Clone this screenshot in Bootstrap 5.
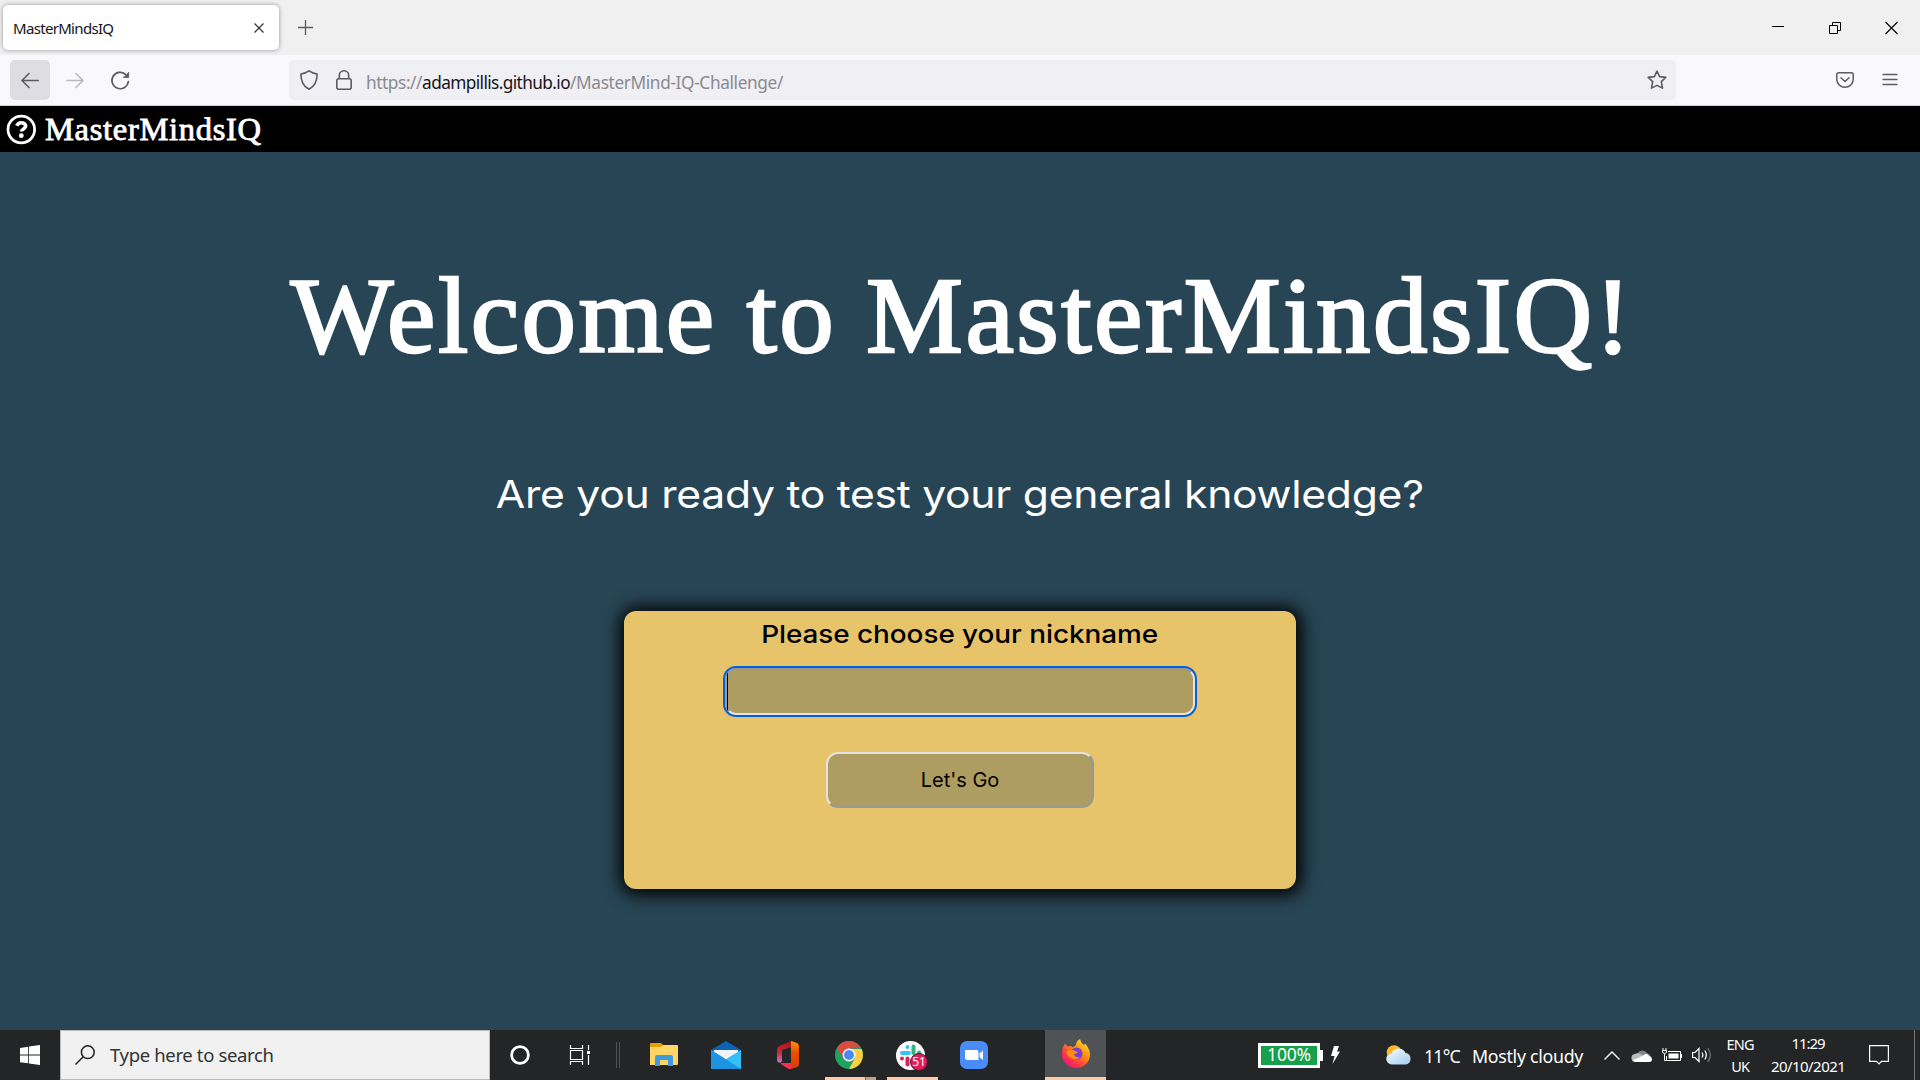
<!DOCTYPE html>
<html lang="en">
<head>
<meta charset="utf-8">
<title>MasterMindsIQ</title>
<link rel="stylesheet" href="https://cdn.jsdelivr.net/npm/bootstrap@5.3.0/dist/css/bootstrap.min.css">
<style>
html,body{height:100%}
body{width:1920px;height:1080px;overflow:hidden;background:#284555;font-family:"Noto Sans","Open Sans",sans-serif}
svg{display:block;flex:none;overflow:visible}
.t{white-space:nowrap;display:block;flex:none}
.tabstrip{height:55px;background:#f0f0f0;padding:5px 22px 5px 3px}
.tab{width:276px;height:45px;background:#fff;border-radius:5px;box-shadow:0 0 4px rgba(80,80,100,.6);padding:0 15px 0 10px}
.tab-title{font-size:15px;line-height:20px;color:#15141a;padding-top:1px;letter-spacing:-.68px}
.win-restore{margin:0 44px 0 45px}
.toolbar{height:51px;background:#f9f9fb;border-bottom:1px solid #ccccce;padding:0 20px 0 10px}
.tool-btn{width:40px;height:40px;border-radius:5px}
.tool-btn.lit{background:#dddde2}
.urlbar{width:1387px;height:40px;background:#f0eff4;border-radius:5px;margin-left:149px;padding:0 9px 0 11px}
.url{font-size:17.25px;line-height:24px;color:#8a8a8f;margin-left:14px;padding-top:5px;letter-spacing:-.42px}
.url .host{color:#15141a;letter-spacing:-.61px}
.url .path{letter-spacing:-.37px}
.brandbar{height:46px;background:#000;padding:0 0 0 6px}
.brand{font:400 31px/40px "Liberation Serif",serif;color:#fff;-webkit-text-stroke:.8px #fff;margin:2px 0 0 9px;letter-spacing:.64px;transform:scaleX(1.05);transform-origin:left}
.hero{height:878px;color:#fff}
.title{font:400 109px/130px "Liberation Serif",serif;-webkit-text-stroke:2.4px #fff;margin:99px 0 1px 4px;letter-spacing:2.5px}
.tagline{font:400 38.5px/50px Inter,sans-serif;margin:87px 0 0;letter-spacing:-.25px;transform:scaleX(1.108)}
.nick{width:672px;height:278px;background:#e7c469;border-radius:12px;box-shadow:1px 1px 17px 5px #000;color:#000;margin-top:92px;padding-top:8px}
.nick-label{font:500 24.7px/30px Inter,sans-serif;letter-spacing:-.05px;transform:scaleX(1.13)}
.nick-input{width:470px;height:47px;border:2px solid;border-color:#989898 #e3e3e3 #e3e3e3 #989898;background:#ae9d61;border-radius:11px;outline:2px solid #0060df;margin-top:19px;padding:3px 0}
.caret{width:1px;height:37px;background:#000}
.go{width:268px;height:56px;border:2px solid;border-color:#e3e3e3 #989898 #989898 #e3e3e3;background:#ae9d61;border-radius:12px;margin-top:37px;color:#000;padding:0}
.go-text{font:400 20px/26px Inter,sans-serif}
.taskbar{height:50px;background:#232527;color:#fff}
.taskbar>*{flex:none}
.start{width:60px;padding-left:20px}
.search{width:430px;height:50px;background:#f1f1f1;border:1px solid #b9b9b9;padding-left:14px;color:#333}
.search-text{font-size:18.5px;line-height:24px;margin-left:15px;letter-spacing:-.35px}
.cell{height:50px;position:relative}
.run::after{content:"";position:absolute;left:0;right:0;bottom:0;height:3px;background:#fdcaa8}
.chrome::before{content:"";position:absolute;z-index:1;right:0;bottom:0;width:11px;height:3px;background:#c79d86;border-left:1px solid #7a665c}
.badge-n{position:absolute;left:23px;top:22.5px;width:18px;height:18px;border-radius:9px;background:#e01e5a;border:1px solid #4e1226;font-size:12px;line-height:16px;text-align:center;color:#fff}
.batt{width:62px;height:25px;border:3px solid #fff;background:#16a04c;margin-left:152px}
.tip{width:3px;height:11px;background:#fff}
.batt-text{font-size:17.5px;line-height:20px;letter-spacing:-.2px;padding-bottom:2px}
.wx{font-size:17.8px;line-height:24px;padding-top:2px}
.temp{margin-left:12px;letter-spacing:-.8px}
.sky{margin-left:12px;letter-spacing:-.3px}
.lang{width:40px;margin-left:8px;font-size:14.5px;line-height:22px;letter-spacing:-.9px}
.clock{width:80px;margin-left:8px;font-size:15px;line-height:23px;letter-spacing:-.55px}
.clock .hour{letter-spacing:-1.08px}
.edge{width:1px;height:50px;background:#777;margin-left:25px}
</style>
</head>
<body class="d-flex flex-column">
<header>
 <div class="tabstrip d-flex align-items-center">
  <div class="tab d-flex align-items-center justify-content-between">
   <span class="t tab-title">MasterMindsIQ</span>
   <svg width="10" height="10" viewBox="0 0 10 10" stroke="#333" stroke-width="1.2"><path d="M.5.5l9 9M9.500 .5l-9 9"/></svg>
  </div>
  <svg class="ms-3" width="31" height="15" viewBox="0 0 31 15" stroke="#5b5b66" stroke-width="1.3"><path d="M3 7.500h15M10.500 0v15"/></svg>
  <div class="ms-auto d-flex align-items-center">
   <svg width="12" height="12" viewBox="0 0 12 12" stroke="#000"><path d="M0 4.500h12"/></svg>
   <svg class="win-restore" width="12" height="12" viewBox="0 0 12 12" fill="none" stroke="#000"><path d="M.5 3.500h8v8h-8zM3.500 3.500v-3h8v8h-3"/></svg>
   <svg width="13" height="12" viewBox="0 0 13 12" stroke="#000" stroke-width="1.1"><path d="M.5 0l12 12M12.500 0l-12 12"/></svg>
  </div>
 </div>
 <div class="toolbar d-flex align-items-center">
  <div class="tool-btn lit d-flex align-items-center justify-content-center"><svg width="18" height="16" fill="none" stroke="#5b5b66" stroke-width="1.6" stroke-linecap="round" stroke-linejoin="round"><path d="M17.200 8.500H1M8 1.500L1 8.500l7 7"/></svg></div>
  <div class="tool-btn d-flex align-items-center justify-content-center ms-1 ps-1"><svg width="18" height="16" fill="none" stroke="#b9b9be" stroke-width="1.6" stroke-linecap="round" stroke-linejoin="round"><path d="M0 8.500H16M9 1.500l7 7-7 7"/></svg></div>
  <div class="tool-btn d-flex align-items-center justify-content-center" style="margin-left:6px"><svg width="20" height="20" viewBox="0 0 20 20" fill="none" stroke="#5b5b66" stroke-width="1.700" stroke-linecap="round"><path d="M18.300 11.500A8.200 8.200 0 1 1 15.500 4.300"/><path d="M18.700 2.500v5h-5z" fill="#5b5b66" stroke-width=".8" stroke-linejoin="round"/></svg></div>
  <div class="urlbar d-flex align-items-center">
   <svg width="18" height="20" viewBox="0 0 18 20" fill="none" stroke="#5b5b66" stroke-width="1.600" stroke-linejoin="round"><path d="M9 .8C6.500 2.600 3.500 3.500.9 4c0 6.500 2.500 12.500 8.100 15.200C14.600 16.500 17.100 10.500 17.100 4 14.500 3.500 11.500 2.600 9 .8z"/></svg>
   <svg style="margin-left:18px" width="16" height="20" viewBox="0 0 16 20" fill="none" stroke="#5b5b66" stroke-width="1.600"><rect x=".8" y="8.800" width="14.400" height="10.400" rx="2"/><path d="M3.300 8.800V5.500a4.700 4.700 0 0 1 9.400 0v3.300"/></svg>
   <span class="t url">https://<span class="host">adampillis.github.io</span><span class="path">/MasterMind-IQ-Challenge/</span></span>
   <svg class="ms-auto" width="20" height="20" viewBox="0 0 20 20" fill="none" stroke="#5b5b66" stroke-width="1.600" stroke-linejoin="round"><path d="M10 1.100l2.600 5.500 6.200.8-4.500 4.200 1.200 6.500L10 15.400l-5.500 2.700 1.200-6.500L1.200 7.400l6.200-.8z"/></svg>
  </div>
  <svg class="ms-auto" width="18" height="16" viewBox="0 0 18 16" fill="none" stroke="#5b5b66" stroke-width="1.500" stroke-linecap="round" stroke-linejoin="round"><path d="M2.500.8h13q1.700 0 1.700 1.700V7.300a8.200 8 0 0 1-16.400 0V2.500Q.8.8 2.500.8zM5 5.800l4 3.700 4-3.700"/></svg>
  <svg style="margin:0 2px 0 28px" width="16" height="14" viewBox="0 0 16 14" stroke="#5b5b66" stroke-width="1.300" stroke-linecap="round"><path d="M1 1.500h14M1 6.500h14M1 11.500h14"/></svg>
 </div>
</header>
<nav class="brandbar d-flex align-items-center">
 <svg width="30" height="30" viewBox="0 0 30 30" fill="none" stroke="#fff"><circle cx="15.300" cy="15.500" r="13.300" stroke-width="2.800"/><path d="M10.800 11.700c1-2.200 2.500-3 4.500-3 2.400 0 4.400 1.300 4.400 3.400 0 2.800-4.200 2.800-4.200 5.300" stroke-width="3.600"/><circle cx="15.300" cy="21.700" r="2.400" fill="#fff" stroke="none"/></svg>
 <span class="t brand">MasterMindsIQ</span>
</nav>
<main class="hero d-flex flex-column align-items-center">
 <h1 class="t title">Welcome to MasterMindsIQ!</h1>
 <p class="t tagline">Are you ready to test your general knowledge?</p>
 <form class="nick d-flex flex-column align-items-center">
  <label class="t nick-label">Please choose your nickname</label>
  <div class="nick-input"><div class="caret"></div></div>
  <button type="button" class="go d-flex align-items-center justify-content-center"><span class="t go-text">Let's Go</span></button>
 </form>
</main>
<footer class="taskbar d-flex align-items-center">
 <div class="start"><svg width="20" height="20" viewBox="0 0 20 20" fill="#fff"><path d="M0 2.900L8.200 1.700V9.500H0zM9 1.600L20 0v9.500H9zM0 10.400h8.200v7.900L0 17.200zM9 10.400h11V20L9 18.500z"/></svg></div>
 <div class="search d-flex align-items-center">
  <svg width="20" height="20" viewBox="0 0 20 20" fill="none" stroke="#222" stroke-width="1.500"><circle cx="12.800" cy="7.200" r="6.400"/><path d="M8.200 11.800L.5 19.500"/></svg>
  <span class="t search-text">Type here to search</span>
 </div>
 <svg style="margin-left:20px" width="20" height="20" fill="none" stroke="#fff" stroke-width="2.700"><circle cx="10" cy="10" r="8.400"/></svg>
 <svg style="margin-left:40px" width="20" height="20" viewBox="0 0 20 20" fill="none" stroke="#fff" stroke-width="1.200"><path d="M.5 0v3.500h12V0M.5 5.500h12v9H.5zM.5 20v-3.500h12V20M18.500 0v5M18.500 10v10"/><path d="M17 6h3v3h-3z" fill="#fff" stroke="none"/></svg>
 <svg style="margin-left:26px" width="4" height="26" stroke="#505355"><path d="M.5 0v26M3.500 0v26"/></svg>
 <svg style="margin-left:30px" width="28" height="24" viewBox="0 0 28 24"><path d="M0 1q0-1 1-1h10l2 2v4H0z" fill="#e6a100"/><path d="M0 4h11l2-2h14q1 0 1 1v18q0 1-1 1H0z" fill="#ffd565"/><path d="M5 23V14q0-2 2-2h14q2 0 2 2v9h-5v-6h-8v6z" fill="#3f9be0"/></svg>
 <svg style="margin-left:33px" width="30" height="28" viewBox="0 0 30 28"><path d="M0 9L15 0l15 9v8H0z" fill="#0a63b4"/><path d="M3 9h24v9H3z" fill="#f3f3f5"/><path d="M0 9l15 9 15-9v19H0z" fill="#32c0f5"/><path d="M0 9l30 19H0z" fill="#1c94e2"/><path d="M3 9h24l-12 9z" fill="#f3f3f5"/></svg>
 <svg style="margin-left:36px" width="22" height="28" viewBox="0 0 22 28"><defs><linearGradient id="of" x1="0" y1="0" x2="0" y2="1"><stop offset="0" stop-color="#a80f0f"/><stop offset=".55" stop-color="#c4303c"/><stop offset="1" stop-color="#c078c8"/></linearGradient><linearGradient id="og" x1="0" y1="0" x2="0" y2="1"><stop offset="0" stop-color="#ff9a00"/><stop offset=".4" stop-color="#e85000"/><stop offset="1" stop-color="#d83b01"/></linearGradient></defs><path d="M14 0L3 4.500Q0 6 0 9v10q0 3 4 2.500L5 20V9l9-3z" fill="url(#of)"/><path d="M14 0l6 2q2 .8 2 3v18q0 2.300-2 3l-6 2z" fill="url(#og)"/><path d="M4 22h10v6l-2.500 0-7-4.500Q3.500 23 4 22z" fill="#f0324b"/></svg>
 <div class="cell run chrome d-flex align-items-center justify-content-center pe-1" style="width:51px;margin-left:26px"><svg width="28" height="28" viewBox="-14 -14 28 28"><circle r="14" fill="#1da261"/><path d="M-12.100 -7A14 14 0 0 1 12.100 -7L0 -6.500-5.600 3.200z" fill="#db4b3f"/><path d="M12.600-6A14 14 0 0 1 0 14L5.800 3.200 0-6z" fill="#ffce44"/><circle r="6.400" fill="#fff"/><circle r="5" fill="#4a89f4"/></svg></div>
 <div class="cell run d-flex align-items-center justify-content-center pe-1" style="width:51px;margin-left:11px"><svg width="29" height="29" viewBox="-14.500 -14.500 29 29"><circle r="14.500" fill="#fff"/><g stroke-width="4" stroke-linecap="round" fill="none"><path d="M-8.500-2.500h7M-3-8.500v.1" stroke="#36c5f0"/><path d="M3-9v6.500M8.500-3v.1" stroke="#2eb67d"/><path d="M-3 3v6M-8.500 3v.1" stroke="#e01e5a"/></g></svg><span class="badge-n">51</span></div>
 <svg style="margin-left:22px" width="28" height="28" viewBox="0 0 28 28"><rect width="28" height="28" rx="7" fill="#4b8cfb"/><path d="M5 9h11.500q2 0 2 2v8H7.500Q5 19 5 16.500zM19.500 12.500L23 9.500v9.500l-3.500-3z" fill="#fff"/></svg>
 <div class="cell run d-flex align-items-center justify-content-center pb-1" style="width:61px;margin-left:57px;background:#505355"><svg width="28" height="29" viewBox="0 0 28 29"><defs><linearGradient id="fx" x1="1" y1="0" x2=".2" y2="1"><stop offset="0" stop-color="#fff44f"/><stop offset=".4" stop-color="#ff980e"/><stop offset=".75" stop-color="#ff3647"/><stop offset="1" stop-color="#e31587"/></linearGradient></defs><path d="M3 4.500l2.500 3L9 7l2 1.500L14 6q0-4 4-6 1 4 4 6l1-1.500Q28 10 28 15.500A14 13.500 0 0 1 0 15.500Q0 9 3 4.500z" fill="url(#fx)"/><circle cx="14.500" cy="14.500" r="6" fill="#7a3fd0"/><path d="M4 13q5-4 9-1l3 1q-1 2-4 2 1 4 6 3-4 4-9 1Q5 17 4 13z" fill="#ff8a16"/></svg></div>
 <div class="batt d-flex align-items-center justify-content-center"><span class="t batt-text">100%</span></div><div class="tip"></div>
 <svg style="margin-left:8px" width="9" height="18" viewBox="0 0 9 18" fill="#fff"><path d="M3 0h5L6 5.500h3L1.500 18l2-8H0z"/></svg>
 <svg style="margin-left:46px" width="26" height="20" viewBox="0 0 26 20"><defs><linearGradient id="cl" x1="0" y1="0" x2="1" y2="1"><stop offset="0" stop-color="#f4fbff"/><stop offset="1" stop-color="#a5cdf2"/></linearGradient></defs><circle cx="8" cy="7.500" r="7.300" fill="#fcb62c"/><path d="M6 19.500A5.500 5.500 0 0 1 5.500 8.500 7.500 7.500 0 0 1 19.500 8a5.800 5.800 0 0 1 0 11.500z" fill="url(#cl)"/></svg>
 <span class="t wx temp">11°C</span><span class="t wx sky">Mostly cloudy</span>
 <svg style="margin-left:21px" width="16" height="9" fill="none" stroke="#fff" stroke-width="1.300"><path d="M.5 8.500L8 1l7.500 7.500"/></svg>
 <svg style="margin-left:12px" width="20" height="13" viewBox="0 0 20 13"><path d="M5 6a5.500 5.500 0 0 1 10-2q3 1 4 4H5z" fill="#858585"/><path d="M4 13A4 4 0 0 1 3 5Q6 3 10 6l6 7z" fill="#bdbdbd"/><path d="M4 13q-2 0-3-2 6-2 10-4.500Q15 3.500 17 7q3 .5 3 3.500 0 2.500-3 2.500z" fill="#fff"/></svg>
 <svg style="margin-left:10px" width="20" height="14" viewBox="0 0 20 14" fill="none" stroke="#fff"><path d="M6 3.500h12.500v9H4.500V8"/><path d="M6.500 5.500h10v5h-10zM19 6h1v4h-1z" fill="#fff" stroke="none"/><path d="M1 0v2M4 0v2M.5 2.500h4v2q-2 2-4 0zM2.500 6v6.500h2"/></svg>
 <svg style="margin-left:10px" width="20" height="16" viewBox="0 0 20 16" fill="none" stroke="#fff" stroke-width="1.200"><path d="M.6 5.500H3l4-4v13l-4-4H.6zM10 5.500q1.800 2.500 0 5M12.800 3.500q3 4.500 0 9"/><path d="M15.800 1q5 7 0 14" stroke="#777"/></svg>
 <div class="lang text-center"><span class="t">ENG</span><span class="t">UK</span></div>
 <div class="clock text-center"><span class="t hour">11:29</span><span class="t">20/10/2021</span></div>
 <svg style="margin-left:21px" width="20" height="20" fill="none" stroke="#fff" stroke-width="1.200"><path d="M.6.6h18.800v15.800h-6.900L10 19l-2.500-2.600H.6z"/></svg>
 <div class="edge"></div>
</footer>
<script src="https://cdn.jsdelivr.net/npm/bootstrap@5.3.0/dist/js/bootstrap.bundle.min.js"></script>
</body>
</html>
